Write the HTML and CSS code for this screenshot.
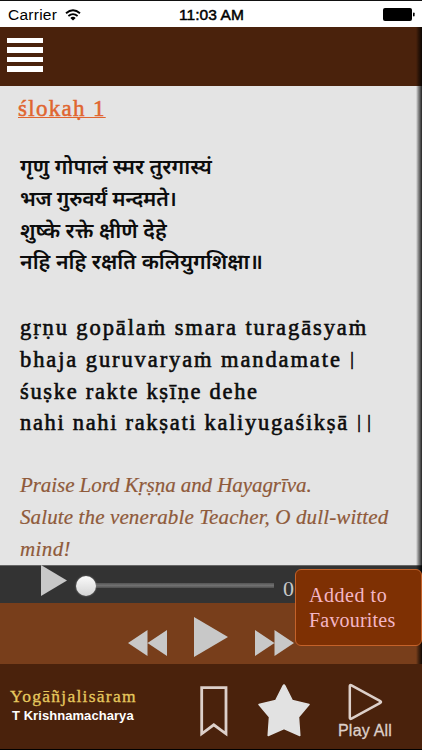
FILE: index.html
```
<!DOCTYPE html>
<html lang="sa">
<head>
    <meta charset="UTF-8">
    <meta name="viewport" content="width=device-width, initial-scale=1.0">
    <title>Yogāñjalisāram</title>
    <link rel="stylesheet" href="styles.css">
</head>
<body>
    <div class="app">
        <div class="status-bar">
            <div class="carrier">
                <span>Carrier</span>
                <svg class="wifi" width="16" height="12" viewBox="0 0 16 12">
                    <path d="M1 4.2Q8 -1.6 15 4.2" fill="none" stroke="#000" stroke-width="1.9"/>
                    <path d="M3.4 7Q8 3.2 12.6 7" fill="none" stroke="#000" stroke-width="1.8"/>
                    <path d="M5.3 8.9Q8 6.8 10.7 8.9L8 11.6Z"/>
                </svg>
            </div>
            <span class="clock">11:03 AM</span>
            <svg class="battery" width="32" height="13" viewBox="0 0 32 13">
                <rect x="0" y="0" width="29" height="13" rx="2"/>
                <rect x="30" y="4.5" width="1.6" height="4" rx="0.8"/>
            </svg>
        </div>

        <div class="main">
            <div class="header">
                <div class="menu-icon"><i></i><i></i><i></i><i></i></div>
            </div>

            <div class="content">
                <h2>ślokaḥ 1</h2>
                <div class="verse devanagari">
                    <p class="d1">गृणु गोपालं स्मर तुरगास्यं</p>
                    <p class="d2">भज गुरुवर्यं मन्दमते।</p>
                    <p class="d3">शुष्के रक्ते क्षीणे देहे</p>
                    <p class="d4">नहि नहि रक्षति कलियुगशिक्षा॥</p>
                </div>
                <div class="verse roman">
                    <p class="r1">gṛṇu gopālaṁ smara turagāsyaṁ</p>
                    <p class="r2">bhaja guruvaryaṁ mandamate <b>|</b></p>
                    <p class="r3">śuṣke rakte kṣīṇe dehe</p>
                    <p class="r4">nahi nahi rakṣati kaliyugaśikṣā <b>||</b></p>
                </div>
                <div class="verse meaning">
                    <p class="m1">Praise Lord Kṛṣṇa and Hayagrīva.</p>
                    <p class="m2">Salute the venerable Teacher, O dull-witted</p>
                    <p class="m3">mind!</p>
                </div>
            </div>

            <div class="player">
                <svg class="play-small" width="26" height="31" viewBox="0 0 26 31"><path d="M0 0L26 15.5L0 31Z"/></svg>
                <div class="slider"><div class="knob"></div></div>
                <span class="time">0</span>
            </div>

            <div class="controls">
                <svg class="rewind" width="39" height="26" viewBox="0 0 39 26"><path d="M0 13L19.5 0V26ZM19.5 13L39 0V26Z"/></svg>
                <svg class="play" width="34" height="40" viewBox="0 0 34 40"><path d="M0 0L34 20L0 40Z"/></svg>
                <svg class="forward" width="39" height="26" viewBox="0 0 39 26"><path d="M0 0L19.5 13L0 26ZM19.5 0L39 13L19.5 26Z"/></svg>
            </div>

            <div class="edge"></div>
            <div class="toast"><span class="t1">Added to</span><span class="t2">Favourites</span></div>
        </div>

        <div class="footer">
            <div class="album">
                <div class="album-name">Yogāñjalisāram</div>
                <div class="artist">T Krishnamacharya</div>
            </div>
            <svg class="bookmark" width="28" height="52" viewBox="0 0 28 52">
                <path d="M1.7 1.7H26V47.8L13.8 38.8L1.7 47.8Z"/>
            </svg>
            <svg class="star" width="52" height="54" viewBox="0 0 52 54">
                <path d="M25 3Q26 1 27 3L34.3 17.5L51 21.5L40.5 34L41.8 52.5L26 45.5L10.2 52.5L11.5 34L1 21.5L17.7 17.5Z"/>
            </svg>
            <div class="play-all">
                <svg width="35" height="38" viewBox="0 0 35 38"><path d="M3 2.2Q1.8 1.6 1.8 3.2V34.5Q1.8 36.5 3.5 35.6L32.3 19.8Q33.7 19 32.3 18.1Z"/></svg>
                <span>Play All</span>
            </div>
        </div>
    </div>
</body>
</html>
```
FILE: styles.css
```
* {
    box-sizing: border-box;
}
body {
    margin: 0;
    font-family: "Liberation Sans", Arial, sans-serif;
    background-color: #e4e4e4;
}
.app {
    width: 422px;
    height: 750px;
    overflow: hidden;
    display: flex;
    flex-direction: column;
}
svg {
    display: block;
    flex: none;
}
p, h2 {
    margin: 0;
}

/* status bar */
.status-bar {
    height: 27px;
    border-top: 1px solid #111;
    background-color: #fff;
    display: grid;
    grid-template-columns: 1fr auto 1fr;
    align-items: center;
    padding: 1px 7px 0 8px;
    font-size: 15.5px;
}
.carrier {
    display: flex;
    align-items: center;
    gap: 8px;
    letter-spacing: 0.25px;
}
.clock {
    -webkit-text-stroke: 0.5px #000;
    letter-spacing: 0.1px;
}
.battery {
    justify-self: end;
}

.main {
    position: relative;
}
.header {
    height: 59px;
    background-color: #4a220c;
    padding: 10.5px 7px;
}
.menu-icon {
    width: 36px;
    height: 34.5px;
    display: flex;
    flex-direction: column;
    justify-content: space-between;
}
.menu-icon i {
    height: 5.5px;
    background-color: #fff;
}

/* verses */
.content {
    height: 479px;
    background-color: #e4e4e4;
    padding: 7px 0 0 20px;
    overflow: hidden;
}
h2 {
    width: max-content;
    height: 61.4px;
    margin-left: -2px;
    font: 23px/31px "Liberation Serif", serif;
    letter-spacing: 1.3px;
    color: #e0652f;
    -webkit-text-stroke: 0.5px #e0652f;
    text-decoration: underline;
    text-decoration-thickness: 1.3px;
    text-decoration-skip-ink: none;
    text-underline-offset: 1px;
}
.verse {
    line-height: 31.6px;
    margin-bottom: 31.6px;
    white-space: nowrap;
}
.verse p {
    height: 31.6px;
    width: max-content;
}
.devanagari {
    font-family: "Noto Sans Devanagari", "Noto Sans", sans-serif;
    font-size: 21.3px;
    font-weight: 600;
    color: #0c0c0c;
}
.d2 {
    font-size: 21px;
    letter-spacing: -0.2px;
}
.roman {
    font-family: "Liberation Serif", serif;
    font-size: 22.5px;
    color: #0c0c0c;
    -webkit-text-stroke: 0.6px #0c0c0c;
}
.r1, .r2 {
    letter-spacing: 1.9px;
}
.r3, .r4 {
    letter-spacing: 1.68px;
}
.roman b {
    font-weight: normal;
    font-size: 18px;
    letter-spacing: 6.5px;
    margin-left: 1px;
    vertical-align: 2px;
    line-height: 1;
}
.meaning {
    font-family: "Liberation Serif", serif;
    font-size: 21px;
    font-style: italic;
    color: #8f5a3a;
    -webkit-text-stroke: 0.2px #8f5a3a;
}
.m1 {
    letter-spacing: -0.07px;
}
.m2 {
    letter-spacing: 0.12px;
}
.m3 {
    letter-spacing: 0.4px;
}

/* player */
.player {
    height: 38px;
    background: linear-gradient(#666 1px, #333 1px);
    display: flex;
    align-items: flex-start;
    padding-left: 41px;
    fill: #c8c8c8;
}
.slider {
    width: 197px;
    height: 20px;
    margin: 11px 0 0 10px;
    display: flex;
    align-items: center;
    background: linear-gradient(#555, #707070, #505050) 10px 7px / 187px 5px no-repeat;
}
.knob {
    width: 20px;
    height: 20px;
    margin-left: -1px;
    border-radius: 50%;
    background: linear-gradient(#fafafa, #d4d4d4);
    box-shadow: 0 0 2px #888;
}
.time {
    margin: 12px 0 0 9px;
    font: 22px/24px "Liberation Serif", serif;
    color: #c8c8c8;
}
.controls {
    height: 61px;
    background-color: #783e1b;
    display: flex;
    align-items: flex-start;
    padding: 14px 0 0 128px;
    fill: #c8c8c8;
}
.rewind, .forward {
    margin-top: 12.5px;
}
.play {
    margin: 0 27px;
}
.edge {
    position: absolute;
    right: 0;
    top: 0;
    bottom: 0;
    width: 6px;
    background: linear-gradient(to right, transparent, rgba(0,0,0,0.35) 35%, rgba(0,0,0,0.85));
}
.toast {
    position: absolute;
    left: 295px;
    top: 542px;
    width: 127px;
    height: 77px;
    padding: 13px 0 0 13px;
    border: 1px solid #c4622a;
    border-radius: 6px;
    background-color: #7e3003;
    color: #f4b6c6;
    font: 20px/25px "Liberation Serif", serif;
}
.toast span {
    display: block;
    width: max-content;
}
.t1 {
    letter-spacing: 0.55px;
}
.t2 {
    letter-spacing: 0.2px;
}

/* footer */
.footer {
    height: 86px;
    background-color: #4a220c;
    border-bottom: 1px solid #000;
    display: flex;
    align-items: flex-start;
}
.album {
    width: 200px;
    padding: 21px 0 0 10px;
}
.album-name {
    width: max-content;
    font: 17.5px/23px "Liberation Serif", serif;
    letter-spacing: 1.27px;
    color: #e6c85e;
    -webkit-text-stroke: 0.3px #e6c85e;
}
.artist {
    width: max-content;
    margin-left: 2px;
    font-size: 13px;
    font-weight: bold;
    line-height: 15px;
    letter-spacing: 0.06px;
    color: #fff;
}
.bookmark {
    margin-top: 22px;
    fill: none;
    stroke: #ddd0ca;
    stroke-width: 2.8;
}
.star {
    margin: 19px 0 0 30px;
    fill: #e2e2e2;
    stroke: #e2e2e2;
    stroke-width: 1.5;
    stroke-linejoin: round;
}
.play-all {
    margin: 19px 0 0 28px;
    font-size: 16px;
    line-height: 18px;
    letter-spacing: 0.2px;
    color: #ddd0ca;
    -webkit-text-stroke: 0.3px #ddd0ca;
}
.play-all svg {
    margin: 0 0 1px 10px;
    fill: none;
    stroke: #ddd0ca;
    stroke-width: 2.5;
}
```
